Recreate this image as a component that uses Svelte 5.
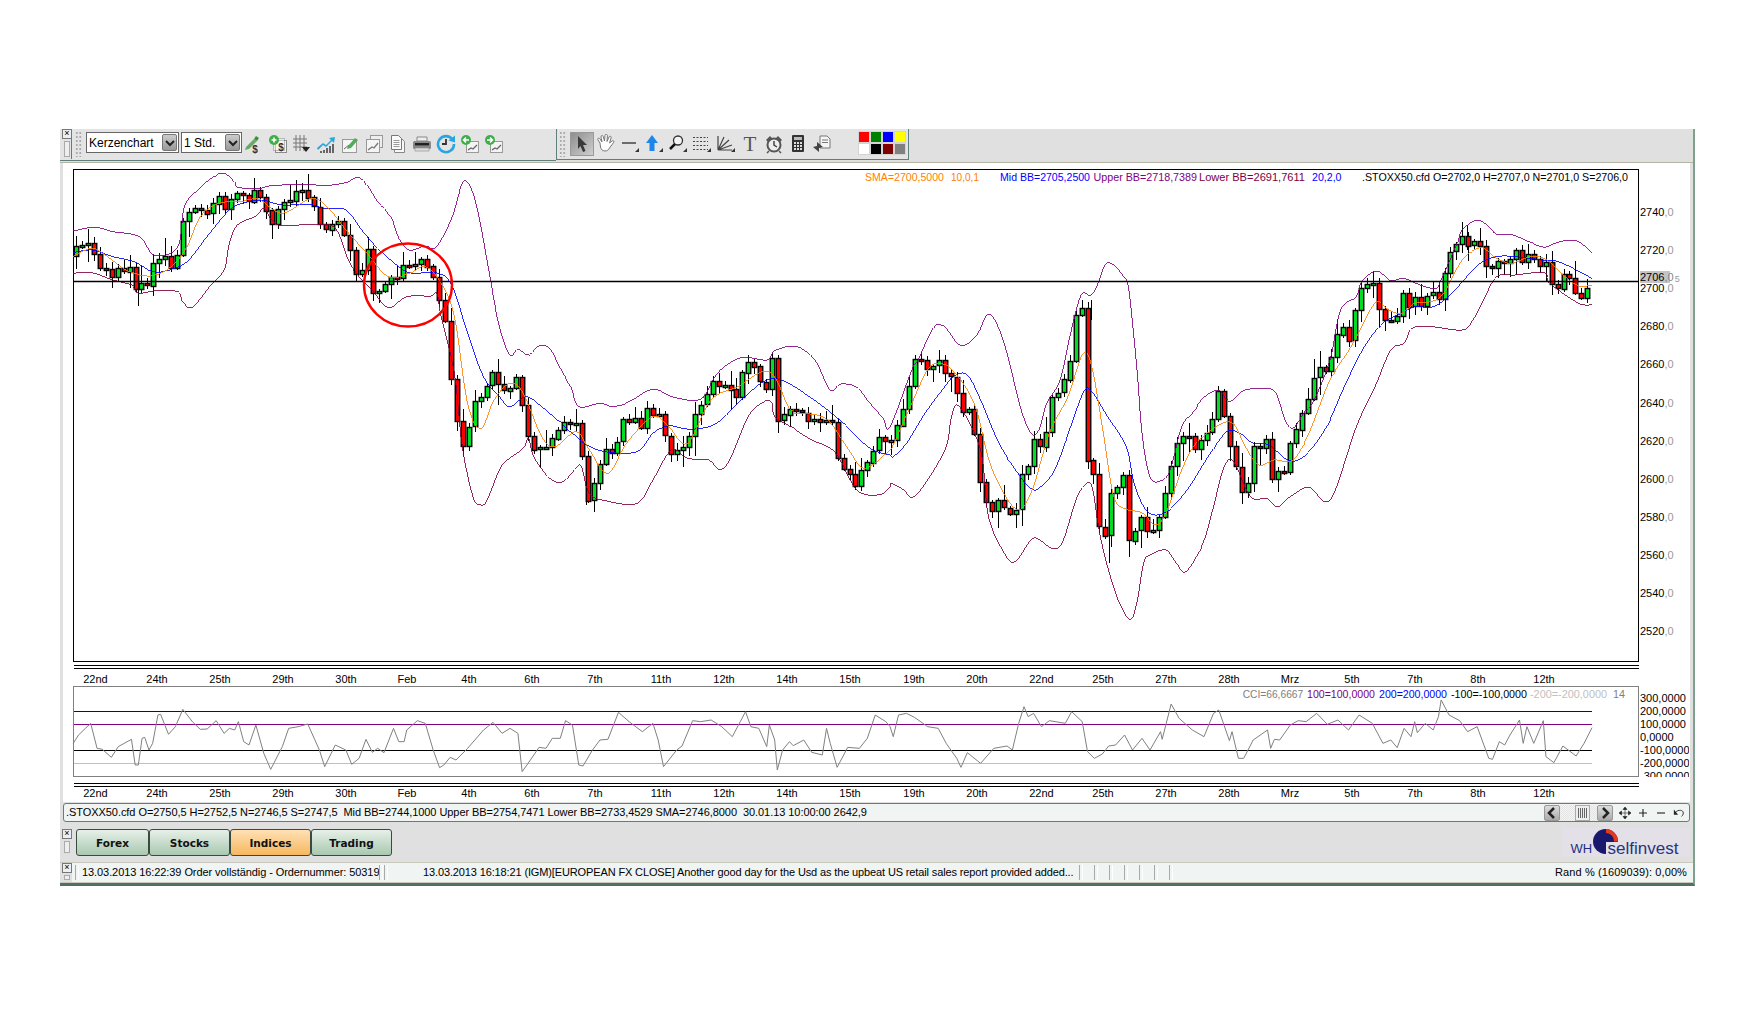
<script>
  // reference points are read off 3x crops, so convert them back to page px
  const z7 = ([x, y]) => [60 + x / 1.889, 160 + y / 3];
  const z8 = ([x, y]) => [880 + x / 1.889, 200 + y / 3];
  const cc = (base) => ([x, y]) => [base + x / 1.889, 680 + y / 3];

  function join(a, b, fa = z7, fb = z8) {
    const left = a.map(fa);
    const last = left[left.length - 1][0];
    return left.concat(b.map(fb).filter((p) => p[0] > last));
  }

  function smooth(pts) {
    let d = `M${pts[0][0].toFixed(1)} ${pts[0][1].toFixed(1)}`;
    for (let i = 0; i < pts.length - 1; i++) {
      const p0 = pts[i - 1] || pts[i];
      const p1 = pts[i];
      const p2 = pts[i + 1];
      const p3 = pts[i + 2] || p2;
      const c1 = [p1[0] + (p2[0] - p0[0]) / 6, p1[1] + (p2[1] - p0[1]) / 6];
      const c2 = [p2[0] - (p3[0] - p1[0]) / 6, p2[1] - (p3[1] - p1[1]) / 6];
      d += `C${c1[0].toFixed(1)} ${c1[1].toFixed(1)} ${c2[0].toFixed(1)} ${c2[1].toFixed(1)} ${p2[0].toFixed(1)} ${p2[1].toFixed(1)}`;
    }
    return d;
  }

  const upper = join(
    [[25,213],[65,202],[100,215],[150,230],[178,285],[222,262],[235,140],[260,90],[290,50],[310,40],[330,65],[335,82],[375,85],[395,78],[420,75],[470,73],[500,77],[540,68],[562,52],[580,75],[600,125],[625,170],[640,235],[660,270],[690,258],[710,262],[740,175],[760,70],[775,80],[790,160],[810,330],[830,500],[850,585],[865,568],[885,585],[905,558],[925,565],[945,625],[965,680],[980,740],[1020,730],[1045,740],[1075,725],[1120,688],[1160,712],[1210,718],[1235,655],[1255,620],[1290,592],[1335,600],[1350,572],[1385,558],[1410,575],[1430,610],[1455,690],[1475,672],[1505,682],[1530,730],[1555,775],[1568,800]],
    [[60,510],[72,480],[100,385],[118,376],[130,395],[148,433],[165,432],[185,400],[203,343],[220,370],[240,460],[265,620],[285,700],[300,690],[315,610],[340,540],[360,400],[380,285],[398,287],[412,250],[425,195],[440,193],[460,230],[470,270],[485,500],[495,700],[510,830],[530,842],[548,810],[570,680],[590,640],[610,595],[640,570],[660,605],[690,570],[740,568],[755,610],[765,660],[780,685],[800,640],[820,600],[850,480],[870,330],[900,290],[910,245],[938,213],[965,242],[990,235],[1020,255],[1050,265],[1060,240],[1090,130],[1100,90],[1128,60],[1150,80],[1165,103],[1195,105],[1225,125],[1255,142],[1280,127],[1315,122],[1345,158]]
  );

  const lower = join(
    [[25,340],[60,338],[100,360],[135,375],[148,400],[180,392],[222,395],[232,425],[250,442],[285,375],[310,330],[320,250],[335,195],[370,168],[385,145],[400,180],[420,197],[480,193],[520,205],[545,300],[565,350],[590,390],[620,443],[655,410],[700,408],[712,400],[720,470],[745,640],[760,860],[780,1010],[792,1033],[805,1025],[830,930],[845,900],[875,865],[885,835],[895,890],[925,955],[950,965],[975,925],[985,920],[1000,1000],[1030,1022],[1090,1030],[1120,960],[1155,870],[1185,895],[1225,900],[1245,928],[1265,900],[1300,770],[1330,725],[1345,730],[1350,770],[1380,800],[1420,840],[1450,860],[1470,890],[1500,980],[1520,1003],[1550,1003],[1568,980]],
    [[22,850],[45,870],[62,892],[90,840],[125,740],[135,650],[150,620],[190,750],[205,950],[235,1060],[255,1085],[285,1020],[300,1018],[325,1045],[345,1025],[370,900],[385,860],[400,858],[415,1000],[430,1100],[450,1200],[472,1258],[485,1210],[498,1090],[510,1065],[540,1050],[560,1090],[578,1115],[610,1030],[630,920],[650,800],[668,785],[700,890],[730,895],[750,920],[775,890],[810,862],[840,905],[860,870],[900,680],[935,560],[965,450],[990,430],[1005,385],[1040,380],[1100,390],[1120,360],[1140,300],[1165,230],[1200,225],[1255,218],[1265,250],[1320,310],[1345,314]]
  );

  const mid = join(
    [[25,278],[60,270],[100,290],[140,305],[175,335],[205,330],[240,305],[280,225],[320,150],[345,130],[380,120],[420,135],[470,133],[500,145],[540,150],[570,210],[600,265],[640,320],[665,340],[710,338],[740,375],[770,520],[800,650],[830,710],[850,740],[880,710],[910,740],[950,795],[990,850],[1030,875],[1090,875],[1120,820],[1150,797],[1190,808],[1240,790],[1290,715],[1335,660],[1370,665],[1420,715],[1450,750],[1480,790],[1530,865],[1568,885]],
    [[25,770],[50,730],[85,640],[120,565],[140,528],[165,525],[190,600],[225,730],[265,830],[285,865],[300,865],[330,810],[360,680],[385,575],[400,575],[430,650],[465,740],[480,850],[500,925],[520,945],[545,930],[580,870],[620,770],[655,695],[680,700],[705,730],[735,735],[770,780],[800,770],[840,690],[880,550],[915,440],[950,370],[985,340],[1010,320],[1045,320],[1080,280],[1130,195],[1165,170],[1200,170],[1250,180],[1285,187],[1345,235]]
  );

  const sma = join(
    [[25,290],[60,265],[90,290],[125,330],[170,348],[210,320],[240,260],[265,170],[300,130],[340,125],[375,118],[420,160],[475,115],[510,150],[540,210],[580,280],[620,350],[660,340],[690,320],[720,370],[745,470],[770,730],[795,805],[820,720],[850,670],[875,700],[910,830],[935,860],[975,815],[1000,870],[1035,940],[1070,850],[1120,770],[1150,800],[1185,850],[1230,720],[1280,680],[1340,635],[1380,750],[1410,760],[1450,780],[1490,870],[1520,925],[1568,870]],
    [[25,735],[60,610],[90,510],[115,490],[145,525],[180,620],[210,800],[255,925],[285,880],[320,700],[355,590],[383,462],[400,500],[420,680],[440,880],[460,925],[495,938],[520,975],[540,940],[570,810],[600,725],[660,665],[690,740],[715,795],[745,780],[780,780],[810,700],[850,540],[890,440],[935,310],[960,330],[985,340],[1010,310],[1040,305],[1065,280],[1100,180],[1135,143],[1160,170],[1190,190],[1230,170],[1260,180],[1290,225],[1320,258],[1345,255]]
  );

  const price = join(
    [[25,290],[35,262],[52,240],[68,300],[85,330],[100,355],[110,330],[130,318],[145,380],[165,365],[175,330],[185,280],[205,320],[220,290],[228,190],[240,160],[262,150],[270,180],[285,125],[298,95],[310,130],[335,95],[345,125],[375,100],[385,130],[400,185],[420,155],[430,120],[465,100],[480,130],[495,190],[530,200],[545,270],[555,330],[570,320],[580,255],[590,390],[612,370],[630,325],[640,360],[655,310],[680,300],[700,310],[712,365],[718,470],[730,490],[735,600],[745,740],[755,850],[770,815],[782,745],[800,680],[820,640],[835,700],[850,665],[868,640],[875,770],[892,900],[905,855],[925,860],[935,815],[965,795],[980,790],[988,950],[995,1010],[1010,950],[1030,880],[1050,880],[1060,790],[1090,770],[1100,800],[1110,740],[1130,760],[1140,825],[1155,870],[1185,850],[1195,770],[1225,700],[1240,660],[1255,670],[1275,720],[1285,655],[1298,605],[1320,640],[1335,680],[1345,590],[1355,780],[1380,740],[1395,760],[1420,790],[1445,810],[1450,730],[1465,870],[1480,930],[1505,970],[1520,925],[1545,850],[1568,835]],
    [[25,785],[35,650],[45,620],[55,570],[65,495],[90,490],[108,470],[125,525],[145,570],[155,625],[170,620],[180,700],[190,860],[200,915],[225,915],[245,962],[258,925],[265,820],[280,810],[290,710],[300,700],[305,765],[320,605],[340,570],[355,530],[365,350],[385,325],[390,780],[400,715],[405,895],[418,1000],[425,1020],[435,880],[450,880],[462,830],[470,1030],[495,940],[510,1000],[525,970],[545,840],[555,750],[575,690],[595,740],[620,690],[640,580],[655,670],[668,770],[685,875],[695,875],[705,725],[733,735],[740,850],[765,810],[770,740],[785,670],[805,635],[822,500],[850,510],[862,390],[880,385],[890,430],[900,300],[910,270],[930,258],[945,345],[955,370],[980,330],[990,275],[1005,320],[1015,290],[1030,320],[1035,290],[1055,290],[1060,215],[1075,180],[1090,125],[1115,125],[1130,130],[1145,190],[1160,210],[1180,175],[1205,152],[1215,200],[1225,160],[1240,190],[1255,165],[1270,240],[1280,255],[1295,215],[1310,280],[1322,305],[1328,262],[1345,235]]
  );

  const cci = join(
    [[25,190],[35,165],[48,145],[58,130],[70,205],[80,208],[97,232],[110,200],[135,178],[142,255],[148,255],[155,175],[160,172],[168,210],[175,190],[185,105],[190,103],[205,163],[218,140],[232,88],[250,125],[265,148],[278,147],[295,122],[310,160],[320,145],[330,150],[337,125],[347,185],[357,195],[370,135],[385,220],[398,268],[420,200],[432,145],[450,140],[468,132],[490,210],[500,260],[520,195],[540,210],[551,253],[565,235],[578,178],[590,217],[600,205],[612,218],[630,145],[640,185],[650,185],[655,150],[675,122],[690,130],[705,210],[717,263],[725,255],[737,232],[748,240],[770,205],[800,150],[818,127],[835,160],[850,145],[865,160],[873,275],[882,255],[905,202],[918,205],[930,175],[945,175],[955,122],[968,135],[980,255],[988,258],[1005,212],[1020,180],[1035,178],[1055,97],[1075,125],[1100,155],[1120,130],[1130,180],[1140,260],[1165,210],[1175,198],[1195,122],[1210,125],[1230,120],[1250,140],[1270,170],[1285,125],[1295,95],[1305,140],[1320,145],[1335,200],[1340,135],[1350,180],[1355,270],[1365,210],[1378,185],[1385,197],[1405,180],[1420,217],[1440,225],[1448,145],[1455,190],[1468,262],[1488,202],[1510,205],[1525,175],[1540,105],[1560,125],[1568,140]],
    [[25,170],[35,105],[50,100],[65,112],[90,140],[110,145],[125,190],[145,235],[153,262],[165,218],[190,250],[215,205],[240,198],[250,210],[262,130],[272,80],[280,110],[290,100],[305,140],[320,122],[350,130],[362,95],[382,125],[392,215],[405,235],[420,222],[432,198],[445,195],[462,165],[477,210],[495,175],[510,210],[530,155],[533,178],[550,72],[565,115],[590,150],[612,170],[630,100],[640,90],[660,182],[665,155],[677,235],[687,235],[705,180],[732,150],[738,205],[745,178],[755,180],[775,135],[790,122],[805,125],[825,100],[845,133],[865,120],[885,150],[905,105],[930,130],[950,190],[965,180],[977,203],[990,145],[1003,170],[1010,125],[1015,158],[1030,130],[1045,150],[1055,110],[1060,60],[1075,105],[1095,122],[1110,155],[1128,140],[1150,235],[1157,238],[1170,185],[1180,195],[1190,165],[1208,120],[1215,190],[1222,140],[1235,190],[1253,122],[1258,230],[1273,248],[1290,198],[1315,228],[1330,190],[1345,143]],
    cc(60),
    cc(880)
  );

  function yAt(path, x) {
    for (let i = 0; i < path.length - 1; i++) {
      if (x <= path[i + 1][0]) {
        const t = (x - path[i][0]) / (path[i + 1][0] - path[i][0] || 1);
        return path[i][1] + (path[i + 1][1] - path[i][1]) * Math.max(0, t);
      }
    }
    return path[path.length - 1][1];
  }

  let seed = 4711;
  const rnd = () => (seed = (seed * 16807) % 2147483647) / 2147483647;

  const candles = [];
  let prev = yAt(price, 74);
  for (let x = 76; x <= 1593; x += 5.95) {
    const close = yAt(price, x) + (rnd() - 0.5) * 13;
    const top = Math.min(prev, close);
    const bottom = Math.max(prev, close);
    candles.push({
      x: Math.round(x),
      top: Math.round(top),
      h: Math.max(2, Math.round(bottom - top)),
      wt: Math.round(top - 2 - rnd() * rnd() * 18),
      wb: Math.round(bottom + 2 + rnd() * rnd() * 20),
      up: close < prev
    });
    prev = close;
  }

  // the few wicks that stick out far beyond their neighbours
  const longWicks = [[138, 270, 306], [586, 470, 505], [1109, 520, 563], [1467, 225, 250], [1091, 300, 320]];

  const dates = [
    ['22nd', 95.5], ['24th', 157], ['25th', 220], ['29th', 283], ['30th', 346], ['Feb', 407],
    ['4th', 469], ['6th', 532], ['7th', 595], ['11th', 661], ['12th', 724], ['14th', 787],
    ['15th', 850], ['19th', 914], ['20th', 977], ['22nd', 1041.5], ['25th', 1103], ['27th', 1166],
    ['28th', 1229], ['Mrz', 1290], ['5th', 1352], ['7th', 1415], ['8th', 1478], ['12th', 1544]
  ];

  const priceLabels = [2740, 2720, 2700, 2680, 2660, 2640, 2620, 2600, 2580, 2560, 2540, 2520];
  const cciLabels = ['300,0000', '200,0000', '100,0000', '0,0000', '-100,0000', '-200,0000', '-300,0000'];

  const legend = [
    { x: 865, w: 79, c: '#ff8000', t: 'SMA=2700,5000' },
    { x: 951, w: 28, c: '#ff8000', t: '10,0,1' },
    { x: 1000, w: 90, c: '#0000ff', t: 'Mid BB=2705,2500' },
    { x: 1093.5, w: 103.5, c: '#800080', t: 'Upper BB=2718,7389' },
    { x: 1199, w: 106, c: '#800040', t: 'Lower BB=2691,7611' },
    { x: 1312, w: 29.5, c: '#0000ff', t: '20,2,0' },
    { x: 1362, w: 266, c: '#000', t: '.STOXX50.cfd O=2702,0 H=2707,0 N=2701,0 S=2706,0' }
  ];

  const cciLegend = [
    { x: 1242.7, w: 60.5, c: '#808080', t: 'CCI=66,6667' },
    { x: 1307, w: 68, c: '#800080', t: '100=100,0000' },
    { x: 1379, w: 68, c: '#0000ff', t: '200=200,0000' },
    { x: 1451, w: 76, c: '#000', t: '-100=-100,0000' },
    { x: 1530, w: 77, c: '#c0c0c0', t: '-200=-200,0000' },
    { x: 1613, w: 12, c: '#808080', t: '14' }
  ];

  const tabs = ['Forex', 'Stocks', 'Indices', 'Trading'];
  const palette = ['#ff0000', '#008000', '#0000ff', '#ffff00', '#ffffff', '#000000', '#800000', '#808080'];
</script>

<div class="window">
  <div class="toolbars">
    <div class="bar first">
      <div class="dock"><span class="close">×</span><span class="handle"></span></div>
      <div class="grip"></div>
      <div class="combo wide"><span>Kerzenchart</span><i><svg viewBox="0 0 10 8" width="10" height="8"><path d="M1 2l4 4 4-4" fill="none" stroke="#222" stroke-width="2"/></svg></i></div>
      <div class="combo narrow"><span>1 Std.</span><i><svg viewBox="0 0 10 8" width="10" height="8"><path d="M1 2l4 4 4-4" fill="none" stroke="#222" stroke-width="2"/></svg></i></div>
      <div class="tool"><svg viewBox="0 0 20 20"><path d="M2 13L10 5l3 2-8 8-4 1z" fill="#6aa86a"/><path d="M10 5l2-3 3 2-2 3z" fill="#3f8f3f"/><text x="11" y="19" class="dollar">$</text></svg></div>
      <div class="tool"><svg viewBox="0 0 20 20"><rect x="7.5" y="6.5" width="11" height="12" fill="#f4f4f4" stroke="#8a8a8a"/><rect x="5.5" y="4.5" width="11" height="12" fill="#f4f4f4" stroke="#8a8a8a" opacity=".5"/><text x="13" y="17" class="dollar">$</text><circle cx="6" cy="6" r="5" fill="#3fae49"/><path d="M3.5 6h5M6 3.5v5" stroke="#fff" stroke-width="1.6"/></svg></div>
      <div class="tool"><svg viewBox="0 0 20 20"><path d="M1 5h14M1 9h14M1 13h14M4 1v16M8 1v16M12 1v16" stroke="#777" fill="none"/><path d="M10 13h8l-4 5z" fill="#222"/></svg></div>
      <div class="tool"><svg viewBox="0 0 20 20"><path d="M7 16h2v3H7zM10 14h2v5h-2zM13 12h2v7h-2zM16 10h2v9h-2zM4 17h2v2H4z" fill="#666"/><path d="M1 14l6-5 3 2 5-5-2-2 6-1-1 6-2-2-6 6-3-2-5 5z" fill="#29a6e0"/></svg></div>
      <div class="tool"><svg viewBox="0 0 20 20"><rect x="2.5" y="5.5" width="14" height="13" fill="#f5f5f5" stroke="#999"/><path d="M4 15l5-4" stroke="#666"/><path d="M8 12l7-8 3 2-7 8-4 1z" fill="#4fae55"/></svg></div>
      <div class="tool"><svg viewBox="0 0 20 20"><rect x="6.5" y="1.5" width="12" height="12" fill="#eee" stroke="#999"/><rect x="2.5" y="5.5" width="13" height="13" fill="#f5f5f5" stroke="#999"/><path d="M4 16l4-3 2 1 4-5" stroke="#777" fill="none" stroke-width="1.3"/></svg></div>
      <div class="tool"><svg viewBox="0 0 20 20"><path d="M6.5 4.5h7l3 3v11h-10z" fill="#f7f7f7" stroke="#888"/><path d="M3.5 1.5h7l3 3v11h-10z" fill="#fafafa" stroke="#777"/><path d="M5.5 6.5h6M5.5 8.5h6M5.5 10.5h6M5.5 12.5h6" stroke="#999"/></svg></div>
      <div class="tool"><svg viewBox="0 0 20 20"><path d="M5 3h10v4H5z" fill="#eee" stroke="#888"/><rect x="1" y="7" width="18" height="8" rx="1.5" fill="#888"/><rect x="3" y="9" width="14" height="2.4" fill="#222"/><rect x="3" y="14" width="14" height="3" fill="#ddd" stroke="#888" stroke-width=".6"/></svg></div>
      <div class="tool"><svg viewBox="0 0 20 20"><path d="M16.5 5.5A8 8 0 1 0 18 10" fill="none" stroke="#29a6e0" stroke-width="2.6"/><path d="M12.5 6.5L19 1.5v7z" fill="#29a6e0"/><path d="M10 5v5H6" fill="none" stroke="#333" stroke-width="1.8"/></svg></div>
      <div class="tool"><svg viewBox="0 0 20 20"><rect x="6.5" y="7.5" width="12" height="11" fill="#f4f4f4" stroke="#999"/><path d="M8 16l3-2 2 1 4-4" stroke="#666" fill="none" stroke-width="1.3"/><circle cx="6" cy="6" r="5" fill="#3fae49"/><path d="M9 6H4M6 3.5L3.5 6 6 8.5" fill="none" stroke="#fff" stroke-width="1.5"/></svg></div>
      <div class="tool"><svg viewBox="0 0 20 20"><rect x="6.5" y="7.5" width="12" height="11" fill="#f4f4f4" stroke="#999"/><path d="M8 16l3-2 2 1 4-4" stroke="#666" fill="none" stroke-width="1.3"/><circle cx="6" cy="6" r="5" fill="#3fae49"/><path d="M3 6h5M6 3.5L8.5 6 6 8.5" fill="none" stroke="#fff" stroke-width="1.5"/></svg></div>
    </div>
    <div class="bar second">
      <div class="grip"></div>
      <div class="tool active"><svg viewBox="0 0 20 20"><path d="M6 2l9 9h-4l2.5 6-2.5 1-2.5-6L6 15z" fill="#3a3a3a"/></svg></div>
      <div class="tool"><svg viewBox="0 0 20 20"><path d="M4 9L2 6c-1-1.5 1-2.5 2-1l2 3-1-5c-.3-1.8 2-2 2.3-.3L8.5 7l.5-5.5c.2-1.8 2.5-1.5 2.4.2L11 7.5l2-4.5c.7-1.6 2.7-.7 2.1.9L13.5 9l2.5-2c1.3-1 2.6.4 1.500 1.6l-4 5.4c-1 1.8-2 3-4.500 3-3 0-4-2-4.500-4z" fill="#fff" stroke="#777"/></svg></div>
      <div class="tool"><svg viewBox="0 0 20 20"><path d="M2 9h14" stroke="#444" stroke-width="1.5"/><path d="M19 14v4h-4z" fill="#333"/></svg></div>
      <div class="tool"><svg viewBox="0 0 20 20"><path d="M8 1l6 8h-3.5v8h-5V9H2z" fill="#1e86e8"/><path d="M19 14v4h-4z" fill="#333"/></svg></div>
      <div class="tool"><svg viewBox="0 0 20 20"><circle cx="10" cy="6.5" r="4.5" fill="#f4f4f4" stroke="#333" stroke-width="1.3"/><path d="M7 10l-5 5" stroke="#111" stroke-width="2.5"/><path d="M19 14v4h-4z" fill="#333"/></svg></div>
      <div class="tool"><svg viewBox="0 0 20 20"><path d="M1 3.5h15M1 7.5h15M1 11.5h15M1 15.5h15" stroke="#444" stroke-dasharray="2 1.5" fill="none"/><path d="M19 14v4h-4z" fill="#333"/></svg></div>
      <div class="tool"><svg viewBox="0 0 20 20"><path d="M2 16V2M2 16L8 3M2 16L13 6M2 16L16 11M2 16h14" stroke="#444" stroke-width="1.2" fill="none"/><path d="M19 14v4h-4z" fill="#333"/></svg></div>
      <div class="tool"><span class="big-t">T</span></div>
      <div class="tool"><svg viewBox="0 0 20 20"><circle cx="10" cy="11" r="6.5" fill="#eee" stroke="#555" stroke-width="2"/><path d="M10 7v4l3 2" stroke="#444" fill="none" stroke-width="1.5"/><path d="M2 6l4-4 2 2-4 4zM18 6l-4-4-2 2 4 4z" fill="#555"/><path d="M5 17l-2 2M15 17l2 2" stroke="#555" stroke-width="1.5"/></svg></div>
      <div class="tool"><svg viewBox="0 0 20 20"><rect x="4" y="1" width="12" height="17" rx="1" fill="#333"/><rect x="6" y="3" width="8" height="3" fill="#bbb"/><path d="M6 8h2v2H6zM9 8h2v2H9zM12 8h2v2h-2zM6 11h2v2H6zM9 11h2v2H9zM12 11h2v2h-2zM6 14h2v2H6zM9 14h2v2H9zM12 14h2v2h-2z" fill="#ddd"/></svg></div>
      <div class="tool"><svg viewBox="0 0 20 20"><path d="M8 2h7l3 3v9H8z" fill="#f5f5f5" stroke="#777"/><path d="M10 6h6M10 8.5h6" stroke="#777"/><path d="M7 18l-6-5 4-1V8l6 5-4 1z" fill="#444"/></svg></div>
      <div class="palette">
        {#each palette as c}
          <span style="background:{c}"></span>
        {/each}
      </div>
    </div>
  </div>

  <div class="chart-area">
    <svg viewBox="63 163 1627 639" width="1627" height="639">
      <rect x="73.5" y="169.5" width="1565" height="491.5" fill="#fff" stroke="#000" class="crisp"/>

      {#each longWicks as w}
        <line x1={w[0] + 0.5} x2={w[0] + 0.5} y1={w[1]} y2={w[2]} stroke="#000" class="crisp"/>
      {/each}
      {#each candles as c}
        <line x1={c.x + 0.5} x2={c.x + 0.5} y1={c.wt} y2={c.wb} stroke="#000" class="crisp"/>
        <rect x={c.x - 1.75} y={c.top + 0.5} width="4.5" height={c.h} fill={c.up ? '#00dd22' : '#ff0000'} stroke="#000" stroke-width="1.4"/>
      {/each}

      <path d={smooth(upper)} class="curve" stroke="#800080"/>
      <path d={smooth(lower)} class="curve" stroke="#800040"/>
      <path d={smooth(mid)} class="curve" stroke="#0000ff"/>
      <path d={smooth(sma)} class="curve" stroke="#ff8000"/>
      <line x1="74" x2="1638" y1="281.5" y2="281.5" stroke="#000" stroke-width="1.3"/>
      <ellipse cx="408" cy="285" rx="44" ry="41.5" fill="none" stroke="#ff0000" stroke-width="2.4"/>

      {#each legend as l}
        <text x={l.x} y="181" fill={l.c} textLength={l.w} lengthAdjust="spacingAndGlyphs">{l.t}</text>
      {/each}

      {#each priceLabels as p, i}
        <text x="1640" y={216 + i * 38.1}>{p}<tspan fill="#999">,0</tspan></text>
      {/each}
      <rect x="1640" y="271" width="30" height="12" fill="#c4c4c4"/>
      <text x="1640" y="281">2706<tspan fill="#888">,0</tspan><tspan fill="#999" font-size="9" dx="1" dy="1">5</tspan></text>

      <path d="M73.5 665.5H1638.7M73.5 668.5H1638.7M73.5 783.5H1638.7M73.5 786.5H1638.7" stroke="#000" class="crisp"/>
      {#each dates as d}
        <text x={d[1]} y="683" text-anchor="middle">{d[0]}</text>
        <text x={d[1]} y="797" text-anchor="middle">{d[0]}</text>
      {/each}

      <rect x="73.5" y="686.5" width="1565" height="90" fill="#fff" stroke="#808080" class="crisp"/>
      <path d="M74 711.5H1592" stroke="#0000c0" class="crisp"/>
      <path d="M74 724.5H1592" stroke="#800080" class="crisp"/>
      <path d="M74 750.5H1592" stroke="#000" class="crisp"/>
      <path d="M74 763.5H1592" stroke="#c0c0c0" class="crisp"/>
      <polyline points={cci.map((p) => p.join(',')).join(' ')} fill="none" stroke="#808080"/>
      {#each cciLegend as l}
        <text x={l.x} y="698" fill={l.c} textLength={l.w} lengthAdjust="spacingAndGlyphs">{l.t}</text>
      {/each}
      <clipPath id="axis"><rect x="1639" y="686" width="50" height="91"/></clipPath>
      <g clip-path="url(#axis)">
        {#each cciLabels as l, i}
          <text x="1640" y={702 + i * 13}>{l}</text>
        {/each}
      </g>
    </svg>
  </div>

  <div class="info">
    <span class="info-text">.STOXX50.cfd O=2750,5 H=2752,5 N=2746,5 S=2747,5&nbsp; Mid BB=2744,1000 Upper BB=2754,7471 Lower BB=2733,4529 SMA=2746,8000&nbsp; 30.01.13 10:00:00 2642,9</span>
    <div class="nav">
      <span class="nav-btn"><svg viewBox="0 0 10 12" width="10" height="12"><path d="M7 1L2 6l5 5" fill="none" stroke="#222" stroke-width="2.5"/></svg></span>
      <span class="track"><span class="thumb"></span></span>
      <span class="nav-btn"><svg viewBox="0 0 10 12" width="10" height="12"><path d="M3 1l5 5-5 5" fill="none" stroke="#222" stroke-width="2.5"/></svg></span>
      <svg class="nav-icon" viewBox="0 0 12 12"><path d="M6 0l2 2.5H4zM6 12l2-2.5H4zM0 6l2.5-2v4zM12 6L9.5 4v4zM6 2v8M2 6h8" fill="#222" stroke="#222" stroke-width=".6"/></svg>
      <svg class="nav-icon" viewBox="0 0 12 12"><path d="M6 2v8M2 6h8" stroke="#222" stroke-width="1.1"/></svg>
      <svg class="nav-icon" viewBox="0 0 12 12"><path d="M2 6h8" stroke="#222" stroke-width="1.1"/></svg>
      <svg class="nav-icon" viewBox="0 0 14 12"><path d="M1 2v6h5z" fill="#222"/><path d="M3 5c3-3 9-3 9 1 0 2-1 3-2 4" fill="none" stroke="#222"/></svg>
    </div>
  </div>

  <div class="tab-row">
    <div class="dock small"><span class="close">×</span><span class="handle"></span></div>
    <div class="tabs">
      {#each tabs as t}
        <div class="tab" class:on={t === 'Indices'}>{t}</div>
      {/each}
    </div>
    <div class="logo">
      <svg viewBox="0 0 128 28" width="128" height="28">
        <text x="8.5" y="25" class="wh">WH</text>
        <circle cx="43.5" cy="13.5" r="12.5" fill="#18186c"/>
        <path d="M44 1A12.5 12.5 0 0 1 56 13.5H52A8 8 0 0 0 44 5z" fill="#e23a1e"/>
        <path d="M44 14H57V28H44z" fill="#e3e0e8"/>
        <text x="45.5" y="25.5" class="self">selfinvest</text>
      </svg>
    </div>
  </div>

  <div class="status">
    <div class="dock small"><span class="close">×</span><span class="handle"></span></div>
    <span class="sep first-sep"></span>
    <span class="order">13.03.2013 16:22:39 Order vollständig - Ordernummer: 50319883</span>
    <span class="sep"></span>
    <span class="sep"></span>
    <span class="news">13.03.2013 16:18:21 (IGM)[EUROPEAN FX CLOSE] Another good day for the Usd as the upbeat US retail sales report provided added...</span>
    <span class="ticks">
      {#each Array(7) as _}
        <span class="sep"></span>
      {/each}
    </span>
    <span class="rand">Rand % (1609039): 0,00%</span>
  </div>
</div>

<style>
  :global(body) {
    margin: 0;
    background: #fff;
    font-family: 'Liberation Sans', Arial, sans-serif;
  }

  .window {
    box-sizing: border-box;
    width: 1635px;
    margin: 129px 0 0 60px;
    background: #e0e0e0;
    border-right: 2px solid #7f9f8f;
    border-bottom: 3px solid #4f6f67;
    display: flex;
    flex-direction: column;
    color: #000;
    font-size: 11px;
  }

  .toolbars {
    display: flex;
    height: 33px;
    border-bottom: 1px solid #b4b4a4;
    box-sizing: content-box;
  }

  .bar {
    display: flex;
    align-items: flex-start;
    height: 31px;
    background: #e4e4e4;
    border-bottom: 1px solid #5f7f7f;
  }

  .first {
    width: 496px;
  }

  .second {
    width: 353px;
    border-left: 1px solid #5f7f7f;
    border-right: 1px solid #5f7f7f;
    box-sizing: border-box;
    height: 31px;
  }

  .dock {
    width: 12px;
    height: 30px;
    flex: none;
    border-right: 1px solid #5f7f7f;
    padding-left: 2px;
    box-sizing: border-box;
    display: flex;
    flex-direction: column;
  }

  .close {
    width: 8px;
    height: 8px;
    border: 1px solid #777;
    background: #eee;
    font-size: 9px;
    line-height: 7px;
    text-align: center;
  }

  .handle {
    width: 4px;
    flex: 1;
    margin: 2px 0 2px 2px;
    border: 1px solid #aaa;
    background: #eee;
  }

  .grip {
    width: 8px;
    height: 26px;
    margin: 2px 3px 0 3px;
    flex: none;
    background-image: radial-gradient(circle, #aaa 1px, transparent 1.1px);
    background-size: 3.5px 4px;
  }

  .second .grip {
    margin: 2px 3px 0 2px;
  }

  .combo {
    height: 21px;
    margin-top: 3px;
    box-sizing: border-box;
    border: 1px solid #666;
    background: #fff;
    display: flex;
    align-items: center;
    justify-content: space-between;
    font-size: 12px;
    padding-left: 2px;
    flex: none;
  }

  .wide {
    width: 93px;
    margin-right: 2px;
  }

  .narrow {
    width: 61px;
    margin-right: 0;
  }

  .combo i {
    width: 15px;
    height: 17px;
    margin-right: 1px;
    border: 1px solid #777;
    border-radius: 2px;
    background: linear-gradient(#ccc, #999);
    display: flex;
    align-items: center;
    justify-content: center;
    box-sizing: border-box;
  }

  .tool {
    width: 24px;
    height: 24px;
    margin-top: 3px;
    flex: none;
    display: flex;
    align-items: center;
    justify-content: center;
    box-sizing: border-box;
  }

  .tool svg {
    width: 20px;
    height: 20px;
  }

  .dollar {
    font-size: 10px;
    font-weight: bold;
    fill: #333;
    text-anchor: middle;
  }

  .active {
    border: 1px solid #999;
    background: linear-gradient(135deg, #8e8e8e, #cfcfcf);
  }

  .big-t {
    font-family: 'Liberation Serif', serif;
    font-size: 21px;
    color: #555;
    line-height: 1;
  }

  .palette {
    margin: 2px 0 0 24px;
    display: grid;
    grid-template-columns: repeat(4, 12px);
    grid-auto-rows: 12px;
  }

  .palette span {
    border: 1px solid #d4d4d4;
  }

  .chart-area {
    margin: 0 0 0 3px;
    width: 1627px;
    background: #fff;
  }

  .chart-area svg {
    display: block;
  }

  .chart-area text {
    font-size: 11px;
    font-family: 'Liberation Sans', Arial, sans-serif;
  }

  .crisp {
    shape-rendering: crispEdges;
  }

  .curve {
    fill: none;
    stroke-width: 0.85;
    shape-rendering: crispEdges;
  }

  .info {
    height: 19px;
    margin: 1px 3px 0 3px;
    box-sizing: border-box;
    border: 1px solid #5f7f7f;
    border-radius: 3px;
    background: #f0f4f2;
    display: flex;
    align-items: center;
    justify-content: space-between;
    padding-left: 2px;
  }

  .info-text {
    letter-spacing: -0.06px;
    margin-bottom: 2px;
  }

  .nav {
    display: flex;
    align-items: center;
    margin-right: 4px;
  }

  .nav-btn {
    width: 16px;
    height: 16px;
    box-sizing: border-box;
    border: 1px solid #999;
    border-radius: 2px;
    background: linear-gradient(#ddd, #aaa);
    display: flex;
    align-items: center;
    justify-content: center;
  }

  .track {
    width: 37px;
    height: 16px;
    display: flex;
    justify-content: flex-end;
    background: repeating-conic-gradient(#e4e4e4 0 25%, #f4f4f4 0 50%) 0 0 / 2px 2px;
  }

  .thumb {
    width: 15px;
    margin-right: 7px;
    background: repeating-linear-gradient(90deg, #666 0 1px, #eee 1px 2px);
    border: 1px solid #aaa;
    box-shadow: inset 0 0 0 2px #eee;
    box-sizing: border-box;
  }

  .nav-icon {
    width: 12px;
    height: 12px;
    margin-left: 6px;
  }

  .tab-row {
    height: 40px;
    display: flex;
    align-items: flex-start;
    justify-content: space-between;
  }

  .dock.small {
    height: 26px;
    margin-top: 7px;
    border-right: none;
    width: 16px;
  }

  .tabs {
    display: flex;
    margin: 7px auto 0 0;
  }

  .tab {
    width: 81px;
    height: 27px;
    box-sizing: border-box;
    border: 1px solid #3a4a40;
    border-radius: 3px;
    background: linear-gradient(#e6f0e8, #a9c8b0);
    display: flex;
    align-items: center;
    justify-content: center;
    font-family: 'DejaVu Sans', sans-serif;
    font-weight: bold;
    font-size: 10.5px;
    color: #111;
  }

  .tab:first-child {
    width: 73px;
  }

  .tab.on {
    background: linear-gradient(#ffe0b4, #f6b860);
  }

  .logo {
    width: 128px;
    height: 28px;
    margin: 6px 3px 0 0;
    background: #e3e0e8;
  }

  .logo svg {
    display: block;
  }

  .wh {
    font-size: 13px;
    fill: #1f2f7f;
  }

  .self {
    font-size: 17px;
    fill: #26357f;
  }

  .status {
    height: 21px;
    box-sizing: border-box;
    background: #f0f4f2;
    border-top: 1px solid #c8c8bc;
    border-bottom: 1px solid #c8c8bc;
    display: flex;
    align-items: center;
    padding-right: 6px;
  }

  .status .dock.small {
    height: 19px;
    margin: 0;
    background: #e0e0e0;
    width: 12px;
  }

  .sep {
    width: 2px;
    height: 15px;
    flex: none;
    border-left: 1px solid #aaa;
    border-right: 1px solid #fff;
    margin-right: 1px;
  }

  .first-sep {
    margin-left: 3px;
    margin-right: 3px;
  }

  .order {
    width: 297px;
    overflow: hidden;
    white-space: nowrap;
    flex: none;
    letter-spacing: -0.08px;
    margin-bottom: 2px;
  }

  .news {
    margin-left: 34px;
    white-space: nowrap;
    letter-spacing: -0.13px;
    margin-bottom: 2px;
  }

  .ticks {
    display: flex;
    gap: 10px;
    margin-left: 6px;
    margin-right: auto;
  }

  .rand {
    white-space: nowrap;
    letter-spacing: 0.1px;
    margin-bottom: 2px;
  }
</style>
